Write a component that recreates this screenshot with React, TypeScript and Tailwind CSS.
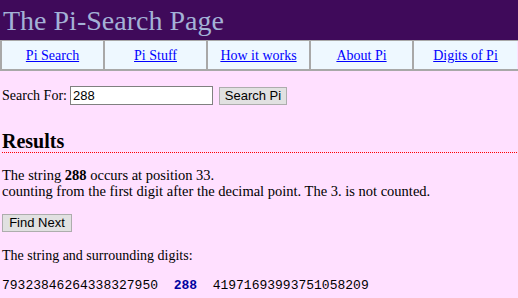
export default function App() {
  const navItems = ["Pi Search", "Pi Stuff", "How it works", "About Pi", "Digits of Pi"];
  return (
    <div className="w-[518px] h-[298px] overflow-hidden bg-[#ffe0ff] text-black" style={{ fontFamily: '"Liberation Serif", "Times New Roman", serif' }}>
      <div className="h-[40px] bg-[#3f0a5a] pl-[3px] flex items-center">
        <span className="text-[28px] leading-[32px] text-[#a4b2d6] mt-[1px]">The Pi-Search Page</span>
      </div>
      <div className="flex border-t border-t-[#a8a8a8] border-b-2 border-b-[#a8a8a8] border-l-2 border-l-[#a8a8a8] w-[530px]">
        {navItems.map((item, i) => (
          <div
            key={item}
            className={
              "w-[103px] h-[28px] bg-[#eef8ff] flex items-center justify-center text-[14px] " +
              (i < navItems.length - 1 ? "border-r-2 border-r-[#a8a8a8]" : "")
            }
          >
            <a href="#" className="text-[#0000ff] underline">{item}</a>
          </div>
        ))}
      </div>
      <div className="pl-[2px]">
        <div className="flex items-center mt-[14px] text-[14px]">
          <span className="mr-[3px]">Search For:</span>
          <input
            defaultValue="288"
            className="w-[143px] h-[19px] border border-[#808080] bg-white px-[2px] text-[13px] outline-none"
            style={{ fontFamily: '"Liberation Sans", Arial, sans-serif' }}
          />
          <button
            className="ml-[6px] w-[68px] h-[18px] border border-[#adadad] bg-[#e1e1e1] text-[13px] leading-[16px]"
            style={{ fontFamily: '"Liberation Sans", Arial, sans-serif' }}
          >
            Search Pi
          </button>
        </div>
        <h2 className="mt-[24px] text-[20px] leading-[22px] font-bold">Results</h2>
        <div className="h-[1px] w-[516px] bg-[repeating-linear-gradient(90deg,#ff0000_0px,#ff0000_1px,transparent_1px,transparent_2px)]" />
        <div className="mt-[14px] text-[14.5px] leading-[16px]">
          <div>
            The string <b>288</b> occurs at position 33.
          </div>
          <div>counting from the first digit after the decimal point. The 3. is not counted.</div>
        </div>
        <button
          className="mt-[15px] w-[70px] h-[18px] border border-[#adadad] bg-[#e1e1e1] text-[13px] leading-[16px] block"
          style={{ fontFamily: '"Liberation Sans", Arial, sans-serif' }}
        >
          Find Next
        </button>
        <div className="mt-[16px] text-[14px] leading-[16px]">The string and surrounding digits:</div>
        <div
          className="mt-[14px] text-[13px] leading-[16px] whitespace-pre"
          style={{ fontFamily: '"Liberation Mono", "Courier New", monospace' }}
        >
          79323846264338327950{"  "}<b className="text-[#0000a0]">288</b>{"  "}41971693993751058209
        </div>
      </div>
    </div>
  );
}
